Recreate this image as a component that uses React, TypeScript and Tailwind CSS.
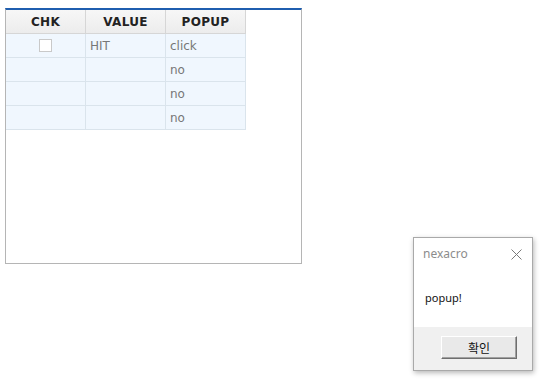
import React from "react";

interface Row {
    chk: boolean;
    value: string;
    popup: string;
}

const rows: Row[] = [
    {chk: true, value: "HIT", popup: "click"},
    {chk: false, value: "", popup: "no"},
    {chk: false, value: "", popup: "no"},
    {chk: false, value: "", popup: "no"},
];

export default function App() {
    return (
        <div className="relative w-[553px] h-[388px] bg-white overflow-hidden">
            {/* grid */}
            <div className="ml-[5px] pt-[8px]">
                <div className="w-[297px] h-[256px] border-t-2 border-t-[#1f5eaf] border-x border-b border-x-[#b5b5b5] border-b-[#b5b5b5] bg-white">
                    <div className="flex h-[24px] border-b border-[#d6d6d6] w-[240px] bg-gradient-to-b from-[#f7f7f7] to-[#ececec]">
                        {["CHK", "VALUE", "POPUP"].map((h) => (
                            <div
                                key={h}
                                className="w-[80px] border-r border-[#d6d6d6] flex items-center justify-center text-[12px] font-bold text-[#222] font-['DejaVu_Sans',sans-serif] tracking-[0.3px]"
                            >
                                {h}
                            </div>
                        ))}
                    </div>
                    {rows.map((r, i) => (
                        <div key={i} className="flex h-[24px] border-b border-[#dae4ec] w-[240px] bg-[#f0f7fe]">
                            <div className="w-[80px] border-r border-[#dae4ec] flex items-center justify-center">
                                {r.chk && <div className="w-[13px] h-[13px] bg-white border border-[#c9c9c9]"/>}
                            </div>
                            <div className="w-[80px] border-r border-[#dae4ec] flex items-center pl-[4px] text-[12px] text-[#777] font-['DejaVu_Sans',sans-serif]">
                                {r.value}
                            </div>
                            <div className="w-[80px] border-r border-[#dae4ec] flex items-center pl-[4px] text-[12px] text-[#777] font-['DejaVu_Sans',sans-serif]">
                                {r.popup}
                            </div>
                        </div>
                    ))}
                </div>
            </div>

            {/* alert popup */}
            <div className="absolute left-[413px] top-[237px] w-[120px] h-[134px] border border-[#a9a9a9] bg-white shadow-[1px_2px_5px_rgba(0,0,0,0.28)] flex flex-col">
                <div className="h-[32px] flex items-center justify-between pl-[9px] pr-[9px]">
                    <span className="text-[12px] text-[#8c8c8c] font-['Noto_Sans','Open_Sans',sans-serif]">nexacro</span>
                    <svg width="11" height="11" viewBox="0 0 11 11" className="mr-[1px]">
                        <path d="M0.5 0.5 L10.5 10.5 M10.5 0.5 L0.5 10.5" stroke="#7a7a7a" strokeWidth="1" fill="none"/>
                    </svg>
                </div>
                <div className="flex-1 pl-[11px] pt-[20px] text-[11px] text-[#111] font-['Noto_Sans','Open_Sans',sans-serif]">
                    popup!
                </div>
                <div className="h-[43px] bg-[#f0f0f0] flex justify-end pr-[15px] pt-[9px]">
                    <button className="w-[76px] h-[23px] bg-[#e9e9e9] border border-t-white border-l-white border-r-[#6e6e6e] border-b-[#6e6e6e] shadow-[inset_-1px_-1px_0_#a0a0a0] text-[12px] text-[#111] font-['Noto_Sans_CJK_KR',sans-serif] leading-none">
                        확인
                    </button>
                </div>
            </div>
        </div>
    );
}
